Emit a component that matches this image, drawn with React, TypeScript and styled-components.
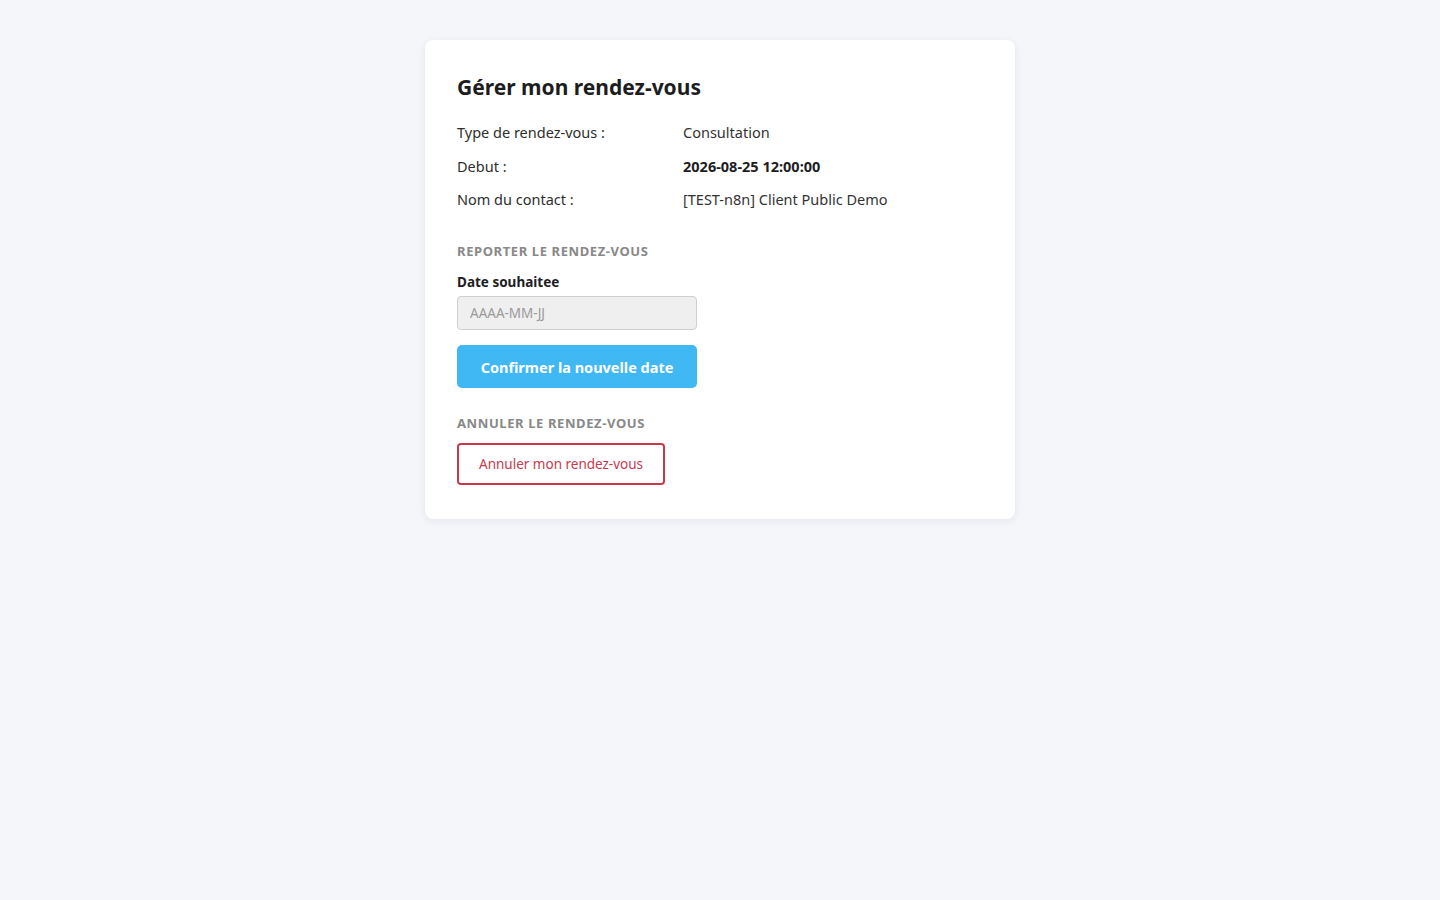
import * as React from "react";
import styled, { createGlobalStyle } from "styled-components";

const details = [
  { label: "Type de rendez-vous :", value: "Consultation", strong: false },
  { label: "Debut :", value: "2026-08-25 12:00:00", strong: true },
  { label: "Nom du contact :", value: "[TEST-n8n] Client Public Demo", strong: false },
];

function App() {
  const [date, setDate] = React.useState("");

  return (
    <>
      <GlobalStyle />
      <Page>
        <Card>
          <Title>Gérer mon rendez-vous</Title>

          <DetailList>
            {details.map((d) => (
              <DetailRow key={d.label}>
                <DetailLabel>{d.label}</DetailLabel>
                <DetailValue $strong={d.strong}>{d.value}</DetailValue>
              </DetailRow>
            ))}
          </DetailList>

          <Section>
            <SectionTitle>Reporter le rendez-vous</SectionTitle>
            <FieldLabel htmlFor="new-date">Date souhaitee</FieldLabel>
            <DateInput
              id="new-date"
              placeholder="AAAA-MM-JJ"
              value={date}
              onChange={(e) => setDate(e.target.value)}
            />
            <PrimaryButton type="button">Confirmer la nouvelle date</PrimaryButton>
          </Section>

          <Section>
            <SectionTitle>Annuler le rendez-vous</SectionTitle>
            <DangerButton type="button">Annuler mon rendez-vous</DangerButton>
          </Section>
        </Card>
      </Page>
    </>
  );
}

const GlobalStyle = createGlobalStyle`
  * { box-sizing: border-box; }
  html, body {
    margin: 0;
    background: #f5f6fa;
    font-family: "Noto Sans", "Open Sans", sans-serif;
    color: #222;
  }
`;

const Page = styled.main`
  min-height: 100vh;
  padding-top: 40px;
  display: flex;
  justify-content: center;
  align-items: flex-start;
`;

const Card = styled.div`
  width: 590px;
  background: #fff;
  border-radius: 8px;
  box-shadow: 0 2px 10px rgba(20, 30, 60, 0.07);
  padding: 32px 32px 34px;
`;

const Title = styled.h1`
  margin: 0 0 19px;
  font-size: 21px;
  font-weight: 700;
  line-height: 30px;
  color: #1d1d1f;
`;

const DetailList = styled.div`
  display: flex;
  flex-direction: column;
  gap: 11.5px;
`;

const DetailRow = styled.div`
  display: grid;
  grid-template-columns: 226px 1fr;
  font-size: 14.5px;
  line-height: 22px;
`;

const DetailLabel = styled.span`
  color: #2e2e2e;
`;

const DetailValue = styled.span<{ $strong: boolean }>`
  font-weight: ${(p) => (p.$strong ? 700 : 400)};
  color: ${(p) => (p.$strong ? "#1d1d1f" : "#333")};
`;

const Section = styled.section`
  display: flex;
  flex-direction: column;
  align-items: flex-start;
  margin-top: 32px;

  & + & {
    margin-top: 26px;
  }
`;

const SectionTitle = styled.h2`
  margin: 0 0 10px;
  font-size: 13px;
  line-height: 18px;
  font-weight: 700;
  text-transform: uppercase;
  letter-spacing: 0.6px;
  color: #888;
`;

const FieldLabel = styled.label`
  margin: 3px 0 5px;
  font-size: 13.5px;
  font-weight: 700;
  line-height: 18px;
  color: #1d1d1f;
`;

const DateInput = styled.input`
  width: 240px;
  height: 34px;
  padding: 0 12px;
  border: 1px solid #cfcfcf;
  border-radius: 4px;
  background: #efefef;
  font-family: inherit;
  font-size: 13.5px;
  color: #333;
  outline: none;

  &::placeholder {
    color: #9a9a9a;
  }
`;

const PrimaryButton = styled.button`
  margin-top: 15px;
  width: 240px;
  height: 43px;
  border: none;
  border-radius: 5px;
  background: #3fb8f3;
  color: #fff;
  font-family: inherit;
  font-size: 14.5px;
  font-weight: 700;
  cursor: pointer;
`;

const DangerButton = styled.button`
  margin-top: 1px;
  height: 42px;
  padding: 0 20px;
  border: 2px solid #c9394b;
  border-radius: 4px;
  background: #fff;
  color: #c9394b;
  font-family: inherit;
  font-size: 13.5px;
  cursor: pointer;
`;

export default App;
